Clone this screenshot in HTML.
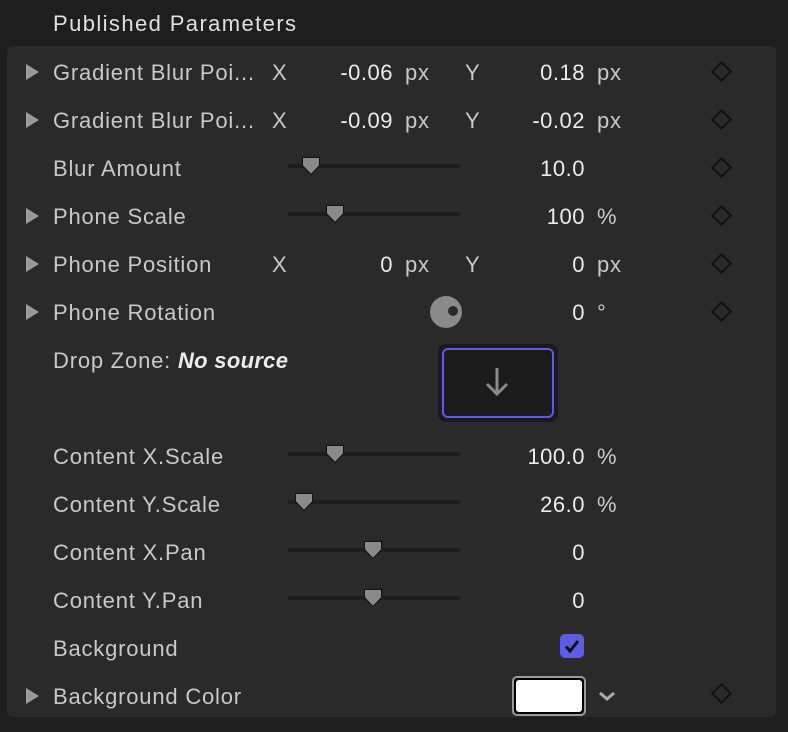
<!DOCTYPE html><html><head><style>
body{margin:0;width:788px;height:732px;background:#1e1e1e;font-family:"Liberation Sans",sans-serif;overflow:hidden;position:relative}
.p{position:absolute;left:7px;top:46px;width:769px;height:671px;background:#2a2a2a;border-radius:5px}
.t{position:absolute;font-size:22px;color:#c9c9c9;line-height:24px;white-space:nowrap;letter-spacing:0.8px;margin-top:2px}
.v{color:#ececec;text-align:right;letter-spacing:0.5px}
.h{position:absolute;left:53px;top:11px;font-size:22px;color:#e0e0e0;letter-spacing:1.4px}
.tri{position:absolute;left:26px;width:0;height:0;border-left:13px solid #9a9a9a;border-top:8px solid transparent;border-bottom:8px solid transparent;margin-top:1px}
.d{position:absolute;left:714px;width:11px;height:11px;border:2px solid #111;transform:rotate(45deg)}
.tr{position:absolute;left:288px;width:172px;height:4px;background:#1e1e1e;border-radius:2px}
.th{position:absolute;width:20px;height:20px}
</style></head><body>
<div class="h">Published Parameters</div>
<div class="p"></div>
<svg width="0" height="0" style="position:absolute"><defs><symbol id="thumb" viewBox="0 0 20 20"><path d="M1.5 1.5h17v8l-8.5 9l-8.5-9z" fill="#8a8a8a" stroke="#111" stroke-width="1"/></symbol></defs></svg>
<div class="tri" style="top:63px"></div><div class="t" style="left:53px;top:59px">Gradient Blur Poi...</div><div class="t" style="left:272px;top:59px">X</div><div class="t v" style="left:300px;width:93px;top:59px">-0.06</div><div class="t" style="left:405px;top:59px">px</div><div class="t" style="left:465px;top:59px">Y</div><div class="t v" style="left:490px;width:95px;top:59px">0.18</div><div class="t" style="left:597px;top:59px">px</div><div class="d" style="top:64px"></div>
<div class="tri" style="top:111px"></div><div class="t" style="left:53px;top:107px">Gradient Blur Poi...</div><div class="t" style="left:272px;top:107px">X</div><div class="t v" style="left:300px;width:93px;top:107px">-0.09</div><div class="t" style="left:405px;top:107px">px</div><div class="t" style="left:465px;top:107px">Y</div><div class="t v" style="left:490px;width:95px;top:107px">-0.02</div><div class="t" style="left:597px;top:107px">px</div><div class="d" style="top:112px"></div>
<div class="t" style="left:53px;top:155px">Blur Amount</div><div class="tr" style="top:164px"></div><svg class="th" style="left:301px;top:156px"><use href="#thumb"/></svg><div class="t v" style="left:490px;width:95px;top:155px">10.0</div><div class="d" style="top:160px"></div>
<div class="tri" style="top:207px"></div><div class="t" style="left:53px;top:203px">Phone Scale</div><div class="tr" style="top:212px"></div><svg class="th" style="left:325px;top:204px"><use href="#thumb"/></svg><div class="t v" style="left:490px;width:95px;top:203px">100</div><div class="t" style="left:597px;top:203px">%</div><div class="d" style="top:208px"></div>
<div class="tri" style="top:255px"></div><div class="t" style="left:53px;top:251px">Phone Position</div><div class="t" style="left:272px;top:251px">X</div><div class="t v" style="left:300px;width:93px;top:251px">0</div><div class="t" style="left:405px;top:251px">px</div><div class="t" style="left:465px;top:251px">Y</div><div class="t v" style="left:490px;width:95px;top:251px">0</div><div class="t" style="left:597px;top:251px">px</div><div class="d" style="top:256px"></div>
<div class="tri" style="top:303px"></div><div class="t" style="left:53px;top:299px">Phone Rotation</div><div style="position:absolute;left:430px;top:296px;width:32px;height:32px;border-radius:50%;background:#8a8a8a"></div><div style="position:absolute;left:448px;top:306px;width:10px;height:10px;border-radius:50%;background:#2a2a2a"></div><div class="t v" style="left:490px;width:95px;top:299px">0</div><div class="t" style="left:597px;top:299px">°</div><div class="d" style="top:304px"></div>
<div class="t" style="left:53px;top:347px">Drop Zone: <i style="color:#ececec;font-weight:bold;letter-spacing:0.3px">No source</i></div>
<div style="position:absolute;left:438px;top:344px;width:120px;height:78px;background:#1a1a1a;border-radius:8px"></div>
<div style="position:absolute;left:442px;top:348px;width:108px;height:66px;border:2px solid #5e5ce6;border-radius:6px;background:#1b1b1b"></div>
<svg style="position:absolute;left:482px;top:365px" width="30" height="34"><path d="M15 3v26M5 19l10 10l10-10" stroke="#8a8a8a" stroke-width="3" fill="none"/></svg>
<div class="t" style="left:53px;top:443px">Content X.Scale</div><div class="tr" style="top:452px"></div><svg class="th" style="left:325px;top:444px"><use href="#thumb"/></svg><div class="t v" style="left:490px;width:95px;top:443px">100.0</div><div class="t" style="left:597px;top:443px">%</div>
<div class="t" style="left:53px;top:491px">Content Y.Scale</div><div class="tr" style="top:500px"></div><svg class="th" style="left:294px;top:492px"><use href="#thumb"/></svg><div class="t v" style="left:490px;width:95px;top:491px">26.0</div><div class="t" style="left:597px;top:491px">%</div>
<div class="t" style="left:53px;top:539px">Content X.Pan</div><div class="tr" style="top:548px"></div><svg class="th" style="left:363px;top:540px"><use href="#thumb"/></svg><div class="t v" style="left:490px;width:95px;top:539px">0</div>
<div class="t" style="left:53px;top:587px">Content Y.Pan</div><div class="tr" style="top:596px"></div><svg class="th" style="left:363px;top:588px"><use href="#thumb"/></svg><div class="t v" style="left:490px;width:95px;top:587px">0</div>
<div class="t" style="left:53px;top:635px">Background</div>
<div style="position:absolute;left:560px;top:634px;width:24px;height:24px;border-radius:5px;background:#5e5ce6"></div>
<svg style="position:absolute;left:560px;top:634px" width="24" height="24"><path d="M6 12.5l4 4.5l8-10" stroke="#111" stroke-width="3" fill="none"/></svg>
<div class="tri" style="top:687px"></div><div class="t" style="left:53px;top:683px">Background Color</div>
<div style="position:absolute;left:512px;top:676px;width:70px;height:36px;border:2px solid #9a9a9a;border-radius:5px;background:#000"></div>
<div style="position:absolute;left:516px;top:680px;width:66px;height:32px;border-radius:3px;background:#fff"></div>
<svg style="position:absolute;left:598px;top:690px" width="18" height="12"><path d="M2 3l7 6l7-6" stroke="#aaa" stroke-width="3" fill="none"/></svg>
<div class="d" style="top:686px"></div>
</body></html>
